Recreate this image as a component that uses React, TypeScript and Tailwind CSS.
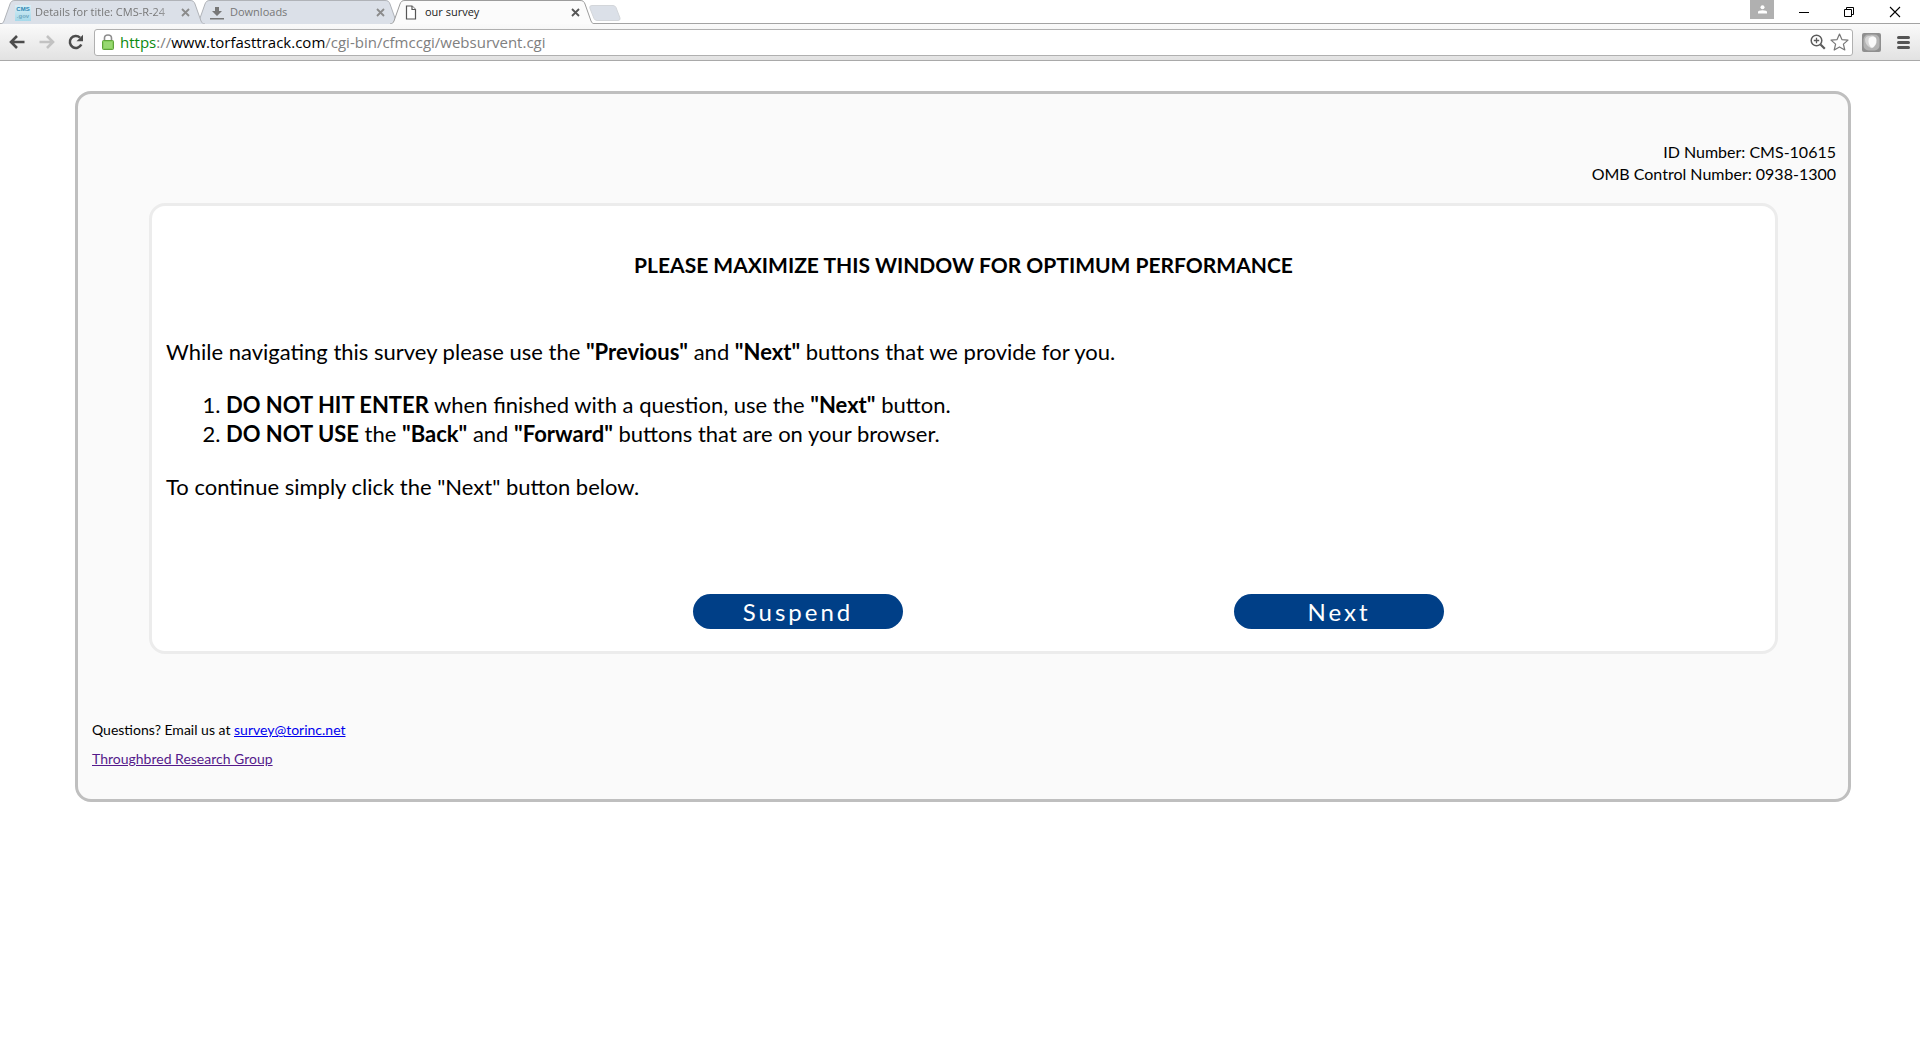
import React from "react";

const TAB_EDGE_LEFT = "M0 24C2 24 3 23 4 21L10 4C11 1.500 12 .5 15 .5";
const TAB_EDGE_RIGHT = "M0 .5C3 .5 4 1.500 5 4L11 21C12 23 13 24 15 24";

type TabProps = {
  title: string;
  icon: React.ReactNode;
  active?: boolean;
  fade?: boolean;
  stack: string;
};

function CloseIcon({ active }: { active?: boolean }) {
  return (
    <svg width="9" height="9" viewBox="0 0 9 9" fill="none" stroke={active ? "#555" : "#8b8b8b"} strokeWidth="1.8">
      <path d="M1 1L8 8M8 1L1 8" />
    </svg>
  );
}

function Tab({ title, icon, active, fade, stack }: TabProps) {
  const fill = active ? "#fbfbfb" : "#dbe0e8";
  const line = active ? "#9c9c9c" : "#b0b3b8";
  return (
    <div className={`relative -mr-[10px] flex h-6 w-[205px] shrink-0 ${stack}`}>
      <svg width="15" height="24" viewBox="0 0 15 24" className="shrink-0">
        <path d={TAB_EDGE_LEFT + "V24Z"} fill={fill} />
        <path d={TAB_EDGE_LEFT} fill="none" stroke={line} />
      </svg>
      <div
        className={`flex min-w-0 flex-1 items-center border-t ${
          active ? "border-[#9c9c9c] bg-[#fbfbfb] text-[#222]" : "border-[#b0b3b8] bg-[#dbe0e8] text-[#777]"
        }`}
      >
        <span className="flex w-5 shrink-0 items-center">{icon}</span>
        <span
          className={`min-w-0 flex-1 text-[11px] whitespace-nowrap ${
            fade ? "[mask-image:linear-gradient(to_right,#000_84%,#0003)]" : ""
          }`}
        >
          {title}
        </span>
        <button aria-label={`Close ${title}`} className="ml-1 shrink-0">
          <CloseIcon active={active} />
        </button>
      </div>
      <svg width="15" height="24" viewBox="0 0 15 24" className="shrink-0">
        <path d={TAB_EDGE_RIGHT + "H0Z"} fill={fill} />
        <path d={TAB_EDGE_RIGHT} fill="none" stroke={line} />
      </svg>
    </div>
  );
}

function CmsIcon() {
  return (
    <span className="flex h-4 w-4 flex-col items-center justify-center bg-linear-to-b from-[#d9eef5] to-[#a5d9ea] font-['Liberation_Sans',sans-serif] text-[6px] leading-[7px] font-bold">
      <span className="text-[#2d86b3]">CMS</span>
      <span className="text-[#6fa8bf]">.gov</span>
    </span>
  );
}

function DownloadIcon() {
  return (
    <svg width="14" height="14" viewBox="0 0 14 14" fill="#777">
      <path d="M5 1H9V5H12L7 10L2 5H5Z" />
      <rect y="12" width="14" height="1.500" />
    </svg>
  );
}

function PageIcon() {
  return (
    <svg width="12" height="15" viewBox="0 0 12 15" fill="#fff" stroke="#555" strokeWidth="1.200">
      <path d="M1.500 1H7L10.500 4.500V14H1.500Z" />
      <path d="M7 1V4.500H10.500" />
    </svg>
  );
}

function TitleBar() {
  return (
    <div className="flex h-6 border-b border-[#a3a3a3] bg-white">
      <div className="flex h-6">
        <Tab stack="z-20" title="Details for title: CMS-R-24" icon={<CmsIcon />} fade />
        <Tab stack="z-10" title="Downloads" icon={<DownloadIcon />} />
        <Tab stack="z-30" title="our survey" icon={<PageIcon />} active />
      </div>
      <button aria-label="New tab" className="ml-1 self-start pt-[5px]">
        <svg width="32" height="16" viewBox="0 0 32 16">
          <path d="M3 .5H24Q26 .5 27 2.500L31 13Q31.500 15.500 29 15.500H8Q6 15.500 5 13.500L.8 3Q.2 .5 3 .5Z" fill="#dbe0e8" stroke="#d3d6da" />
        </svg>
      </button>
      <div className="ml-auto flex items-start">
        <button aria-label="Profile" className="flex h-[19px] w-6 items-center justify-center bg-[#b0b0b0]">
          <svg width="9" height="9" viewBox="0 0 9 9" fill="#fff">
            <circle cx="4.500" cy="2.200" r="2" />
            <path d="M0 8.500V7Q0 5.200 4.500 5.200T9 7V8.500Z" />
          </svg>
        </button>
        <div className="flex items-center pt-[6px]">
          <button aria-label="Minimize" className="ml-6">
            <svg width="12" height="12" viewBox="0 0 12 12" stroke="#000">
              <path d="M1 6.500H11" />
            </svg>
          </button>
          <button aria-label="Restore" className="ml-[33px]">
            <svg width="12" height="12" viewBox="0 0 12 12" fill="none" stroke="#000">
              <path d="M1.500 3.500H8.500V10.500H1.500ZM3.500 3.500V1.500H10.500V8.500H8.500" />
            </svg>
          </button>
          <button aria-label="Close window" className="mr-[19px] ml-[34px]">
            <svg width="12" height="12" viewBox="0 0 12 12" stroke="#000" strokeWidth="1.100">
              <path d="M1 1L11 11M11 1L1 11" />
            </svg>
          </button>
        </div>
      </div>
    </div>
  );
}

function Arrow({ color, flip }: { color: string; flip?: boolean }) {
  return (
    <svg width="16" height="14" viewBox="0 0 16 14" fill="none" stroke={color} strokeWidth="2.600" className={flip ? "-scale-x-100" : ""}>
      <path d="M15.500 7H2.500M8 1L2 7L8 13" />
    </svg>
  );
}

function Toolbar() {
  return (
    <div className="flex h-[37px] items-center border-b border-[#a9a9a9] bg-linear-to-b from-[#fafafa] to-[#e2e2e2] pl-[9px]">
      <button aria-label="Back"><Arrow color="#4c4c4c" /></button>
      <button aria-label="Forward" className="ml-[14px]"><Arrow color="#c2c2c2" flip /></button>
      <button aria-label="Reload" className="ml-[13px]">
        <svg width="16" height="16" viewBox="0 0 16 16" fill="none">
          <path d="M13.300 10.500A6 6 0 1 1 12 3.600" stroke="#4c4c4c" strokeWidth="2.500" />
          <path d="M15 .8V7.300H8.500Z" fill="#4c4c4c" />
        </svg>
      </button>
      <div className="ml-[10px] flex h-[27px] min-w-0 flex-1 items-center rounded-[3px] border border-[#b0b0b0] bg-white pr-[3px] pl-[7px]">
        <svg width="12" height="16" viewBox="0 0 12 16" fill="none">
          <path d="M2.500 8V4Q2.500 1 6 1T9.500 4V8" stroke="#8d8d8d" strokeWidth="1.600" />
          <rect x=".5" y="6.500" width="11" height="9" rx="1" fill="#86cf5c" stroke="#5fa23b" />
          <path d="M2 9H10M2 11H10M2 13H10" stroke="#a9e187" />
        </svg>
        <span className="ml-[6px] text-[15px] whitespace-nowrap text-[#808080]">
          <span className="text-[#0b8a10]">https</span>://<span className="text-black">www.torfasttrack.com</span>/cgi-bin/cfmccgi/websurvent.cgi
        </span>
        <button aria-label="Zoom" className="ml-auto">
          <svg width="16" height="16" viewBox="0 0 16 16" fill="none" stroke="#5c5c5c">
            <circle cx="6.500" cy="6.500" r="5.300" strokeWidth="1.500" />
            <path d="M6.500 3.800V9.200M3.800 6.500H9.200" strokeWidth="1.300" />
            <path d="M10.500 10.500L14.800 14.800" strokeWidth="2.200" />
          </svg>
        </button>
        <button aria-label="Bookmark" className="ml-1">
          <svg width="19" height="18" viewBox="0 0 19 18" fill="#fff" stroke="#777" strokeWidth="1.200" strokeLinejoin="round">
            <path d="M9.500 1L11.900 6.600L18 7.100L13.400 11.100L14.800 17L9.500 13.900L4.200 17L5.600 11.100L1 7.100L7.100 6.600Z" />
          </svg>
        </button>
      </div>
      <button aria-label="Extension" className="ml-[9px]">
        <svg width="19" height="19" viewBox="0 0 19 19">
          <rect width="19" height="19" rx="2" fill="#8f8f8f" />
          <rect x="1.500" y="1.500" width="16" height="16" rx="5" fill="#b4b4b4" />
          <path d="M3 6Q4 2.500 8 3Q11 1.500 14 5Q16 10 12 14Q10 16 8 14.500Q3 12 3 6Z" fill="#d6d6d6" />
          <path d="M7 5Q11 2 14 5Q15.500 10 11.500 14Q9 15.500 8 13Q5.500 9 7 5Z" fill="#fafafa" />
        </svg>
      </button>
      <button aria-label="Menu" className="mr-[10px] ml-4">
        <svg width="13" height="13" viewBox="0 0 13 13" stroke="#555" strokeWidth="3" strokeLinecap="round">
          <path d="M1.500 1.500H11.500M1.500 6.500H11.500M1.500 11.500H11.500" />
        </svg>
      </button>
    </div>
  );
}

function PillButton({ children }: { children: string }) {
  return (
    <button className="h-[35px] w-[210px] rounded-full bg-[#003f87] pt-px text-2xl leading-[34px] tracking-[3px] text-white">
      {children}
    </button>
  );
}

export default function App() {
  return (
    <div className="min-h-screen bg-white">
      <header className="font-['Open_Sans',sans-serif]">
        <TitleBar />
        <Toolbar />
      </header>
      <main className="pt-[30px] pr-[69px] pl-[75px] font-[Lato,sans-serif] text-black">
        <div className="rounded-2xl border-3 border-[#bfbfbf] bg-[#fafafa] pt-[47px] pr-3 pb-[31px] pl-[14px]">
          <div className="text-right text-base leading-[22px]">
            <p>ID Number: CMS-10615</p>
            <p>OMB Control Number: 0938-1300</p>
          </div>
          <section className="mt-[18px] mr-[58px] ml-[57px] rounded-2xl border-3 border-[#ececec] bg-white px-[14px] pt-11 pb-[22px] text-[22px] leading-[29px]">
            <h1 className="text-center text-[21px] font-bold">PLEASE MAXIMIZE THIS WINDOW FOR OPTIMUM PERFORMANCE</h1>
            <p className="mt-[58px]">
              While navigating this survey please use the <b>"Previous"</b> and <b>"Next"</b> buttons that we provide for you.
            </p>
            <ol className="mt-6 list-decimal pl-[60px]">
              <li><b>DO NOT HIT ENTER</b> when finished with a question, use the <b>"Next"</b> button.</li>
              <li><b>DO NOT USE</b> the <b>"Back"</b> and <b>"Forward"</b> buttons that are on your browser.</li>
            </ol>
            <p className="mt-6">To continue simply click the "Next" button below.</p>
            <div className="-mx-[14px] mt-[93px] grid grid-cols-3">
              <div className="col-start-2 flex justify-start"><PillButton>Suspend</PillButton></div>
              <div className="flex justify-start"><PillButton>Next</PillButton></div>
            </div>
          </section>
          <footer className="mt-[67px] text-sm leading-[18px]">
            <p>Questions? Email us at <a href="mailto:survey@torinc.net" className="text-[#0000ee] underline">survey@torinc.net</a></p>
            <p className="mt-[11px]"><a href="#research-group" className="text-[#551a8b] underline">Throughbred Research Group</a></p>
          </footer>
        </div>
      </main>
    </div>
  );
}
